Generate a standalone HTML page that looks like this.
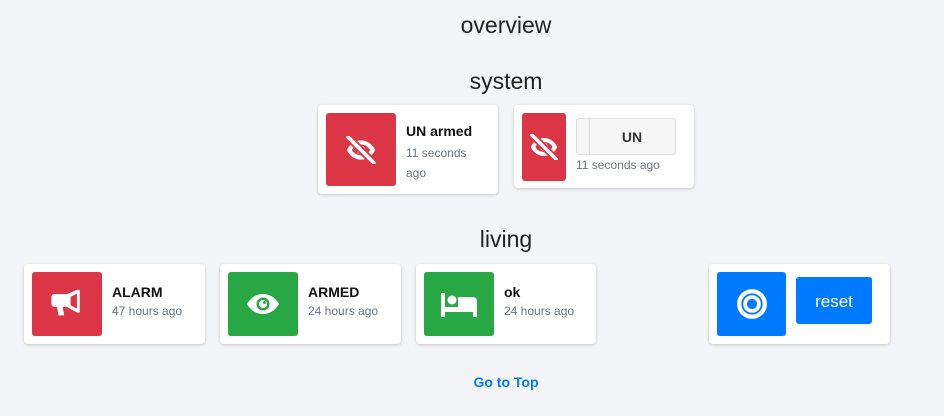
<!DOCTYPE html>
<html><head><meta charset="utf-8"><style>
*{box-sizing:border-box;margin:0;padding:0}
body{width:944px;height:416px;background:#f4f5f8;font-family:"Liberation Sans",sans-serif;position:relative;overflow:hidden;color:#212529}
.h{position:absolute;left:0;width:1012px;text-align:center;font-size:23px;color:#222}
.card{position:absolute;background:#fff;border-radius:4px;box-shadow:0 1px 3px rgba(0,0,0,.2)}
.ic{position:absolute;border-radius:3px;display:flex;align-items:center;justify-content:center}
.red{background:#dc3545}.green{background:#28a745}.blue{background:#007bff}
.t{position:absolute;font-weight:bold;font-size:14px;color:#111}
.s{position:absolute;font-size:12px;color:#6c757d;line-height:20px}
</style></head><body>
<div class="h" style="top:12px">overview</div>
<div class="h" style="top:68px">system</div>
<div class="h" style="top:226px">living</div>

<div class="card" style="left:318px;top:105px;width:180px;height:89px">
 <div class="ic red" style="left:8px;top:8px;width:70px;height:73px">
 <svg width="32" height="28" viewBox="0 0 30 26"><path d="M4 13c2-4 6-7 11-7s9 3 11 7c-2 4-6 7-11 7s-9-3-11-7z" fill="none" stroke="#fff" stroke-width="4"/><circle cx="15" cy="13" r="4" fill="#fff"/><path d="M3 1l24 24" stroke="#dc3545" stroke-width="7"/><path d="M3 1l24 24" stroke="#fff" stroke-width="3.5" stroke-linecap="round"/></svg></div>
 <div class="t" style="left:88px;top:18px">UN armed</div>
 <div class="s" style="left:88px;top:38px;width:80px">11 seconds ago</div>
</div>

<div class="card" style="left:514px;top:105px;width:180px;height:83px">
 <div class="ic red" style="left:8px;top:8px;width:44px;height:68px">
 <svg width="30" height="26" viewBox="0 0 30 26"><path d="M4 13c2-4 6-7 11-7s9 3 11 7c-2 4-6 7-11 7s-9-3-11-7z" fill="none" stroke="#fff" stroke-width="4"/><circle cx="15" cy="13" r="4" fill="#fff"/><path d="M3 1l24 24" stroke="#dc3545" stroke-width="7"/><path d="M3 1l24 24" stroke="#fff" stroke-width="3.5" stroke-linecap="round"/></svg></div>
 <div style="position:absolute;left:62px;top:13px;width:100px;height:37px;background:#f6f6f7;border:1px solid #ddd;border-radius:3px">
  <div style="position:absolute;left:12px;top:0;bottom:0;border-left:1px solid #ddd"></div>
  <div style="position:absolute;left:12px;right:0;top:10px;text-align:center;font-weight:bold;font-size:14px;color:#333">UN</div>
 </div>
 <div class="s" style="left:62px;top:50px">11 seconds ago</div>
</div>

<div class="card" style="left:24px;top:264px;width:181px;height:80px">
 <div class="ic red" style="left:8px;top:8px;width:70px;height:64px">
 <svg width="34" height="34" viewBox="0 0 24 24" fill="#fff"><path d="M19 2h2v16h-2l-7-4H9l1 6H6l-1-6H3a2 2 0 0 1-2-2V7a2 2 0 0 1 2-2h9z"/><path d="M14.5 7l4.5-2.3v10.6L14.5 13z" fill="#dc3545"/></svg></div>
 <div class="t" style="left:88px;top:20px">ALARM</div>
 <div class="s" style="left:88px;top:37px">47 hours ago</div>
</div>

<div class="card" style="left:220px;top:264px;width:181px;height:80px">
 <div class="ic green" style="left:8px;top:8px;width:70px;height:64px">
 <svg width="34" height="22" viewBox="0 0 34 22"><path d="M1 11C5 4 11 1 17 1s12 3 16 10c-4 7-10 10-16 10S5 18 1 11z" fill="#fff"/><circle cx="17" cy="11" r="6.5" fill="#28a745"/><circle cx="17" cy="11" r="4" fill="#fff"/><circle cx="18.5" cy="9.5" r="1.5" fill="#28a745"/></svg></div>
 <div class="t" style="left:88px;top:20px">ARMED</div>
 <div class="s" style="left:88px;top:37px">24 hours ago</div>
</div>

<div class="card" style="left:416px;top:264px;width:180px;height:80px">
 <div class="ic green" style="left:8px;top:8px;width:70px;height:64px">
 <svg width="40" height="26" viewBox="0 0 40 26" fill="#fff"><rect x="2" y="2" width="4" height="24"/><rect x="2" y="16" width="36" height="5"/><circle cx="13" cy="9" r="4.5"/><path d="M19 6h15a4 4 0 0 1 4 4v7H19z"/><rect x="34" y="16" width="4" height="10"/></svg></div>
 <div class="t" style="left:88px;top:20px">ok</div>
 <div class="s" style="left:88px;top:37px">24 hours ago</div>
</div>

<div class="card" style="left:709px;top:264px;width:181px;height:80px">
 <div class="ic blue" style="left:8px;top:8px;width:69px;height:64px">
 <svg width="32" height="32" viewBox="0 0 30 30"><circle cx="15" cy="15" r="12" fill="none" stroke="#fff" stroke-width="4"/><circle cx="15" cy="15" r="6.5" fill="none" stroke="#fff" stroke-width="3.5"/></svg></div>
 <div style="position:absolute;left:87px;top:13px;width:76px;height:47px;background:#007bff;border-radius:3px;color:#fff;font-size:17px;text-align:center;line-height:50px">reset</div>
</div>

<div style="position:absolute;left:0;width:1012px;top:374px;text-align:center;font-size:14px;color:#007bff;font-weight:bold">Go to Top</div>
</body></html>
